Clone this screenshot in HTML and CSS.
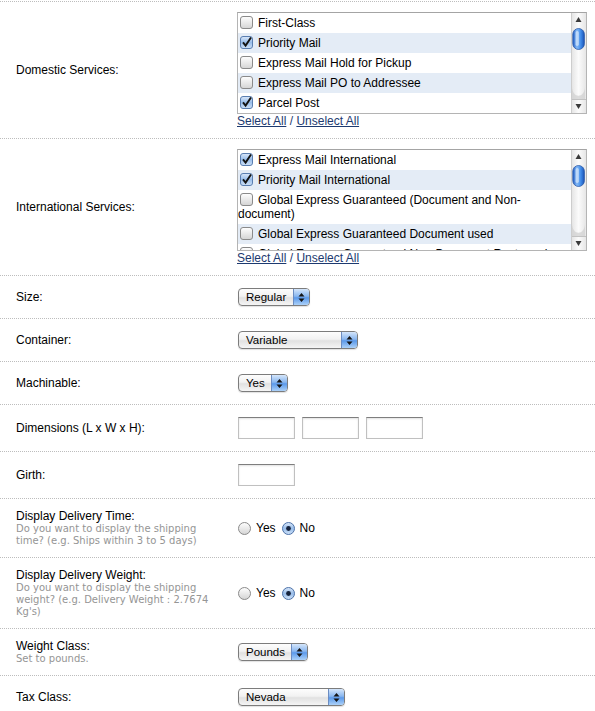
FILE: index.html
```html
<!DOCTYPE html>
<html>
<head>
<meta charset="utf-8">
<title>Shipping Settings</title>
<link rel="stylesheet" href="styles.css">
</head>
<body>
<svg class="defs" width="0" height="0" aria-hidden="true">
  <defs>
    <linearGradient id="g-box" x1="0" y1="0" x2="0" y2="1">
      <stop offset="0" stop-color="#ffffff"/>
      <stop offset="1" stop-color="#d4d4d4"/>
    </linearGradient>
    <linearGradient id="g-on" x1="0" y1="0" x2="0" y2="1">
      <stop offset="0" stop-color="#dce9fa"/>
      <stop offset=".5" stop-color="#98bdea"/>
      <stop offset="1" stop-color="#cfe2f8"/>
    </linearGradient>
    <linearGradient id="g-track" x1="0" y1="0" x2="1" y2="0">
      <stop offset="0" stop-color="#e2e2e2"/>
      <stop offset=".5" stop-color="#fbfbfb"/>
      <stop offset="1" stop-color="#e6e6e6"/>
    </linearGradient>
    <linearGradient id="g-thumb" x1="0" y1="0" x2="1" y2="0">
      <stop offset="0" stop-color="#1f5cc4"/>
      <stop offset=".35" stop-color="#86bbf7"/>
      <stop offset=".7" stop-color="#3f8ae8"/>
      <stop offset="1" stop-color="#1b52b4"/>
    </linearGradient>
    <symbol id="cb-off" viewBox="0 0 13 13">
      <rect x=".5" y=".5" width="12" height="12" rx="2.5" fill="url(#g-box)" stroke="#8a8a8a"/>
    </symbol>
    <symbol id="cb-on" viewBox="0 0 13 13">
      <rect x=".5" y=".5" width="12" height="12" rx="2.5" fill="url(#g-on)" stroke="#5a7eb0"/>
      <path d="M3 6.3 L5.6 9.6 L11 1.5" fill="none" stroke="#141414" stroke-width="1.9"/>
    </symbol>
    <symbol id="rd-off" viewBox="0 0 13 13">
      <circle cx="6.5" cy="6.5" r="6" fill="url(#g-box)" stroke="#8a8a8a"/>
    </symbol>
    <symbol id="rd-on" viewBox="0 0 13 13">
      <circle cx="6.5" cy="6.5" r="6" fill="url(#g-on)" stroke="#4d72a8"/>
      <circle cx="6.5" cy="6.5" r="2.4" fill="#16233c"/>
    </symbol>
    <symbol id="updown" viewBox="0 0 7 9">
      <path d="M3.5 0 L6.5 3.5 L0.5 3.5 Z M0.5 5.5 L6.5 5.5 L3.5 9 Z" fill="#151515"/>
    </symbol>
    <symbol id="scroll" viewBox="0 0 15 100">
      <rect width="15" height="100" fill="url(#g-track)"/>
      <rect x="0" y="0" width="1" height="100" fill="#cdcdcd"/>
      <path d="M7.5 4 L10.5 9 L4.5 9 Z" fill="#3a3a3a"/>
      <rect x="1.8" y="15.5" width="11.6" height="21" rx="5.8" fill="url(#g-thumb)" stroke="#2a58a6" stroke-width=".8"/>
      <rect x="4.5" y="18" width="3.4" height="15" rx="1.7" fill="#ffffff" opacity=".5"/>
      <path d="M1 73 C1 86 14 86 14 73 L14 86 L1 86 Z" fill="#cfcfcf" opacity=".7"/>
      <rect x="1" y="86" width="14" height="1" fill="#c2c2c2"/>
      <path d="M4.5 91 L10.5 91 L7.5 96 Z" fill="#3a3a3a"/>
    </symbol>
  </defs>
</svg>

<div class="form">
  <div class="row">
    <div class="label">Domestic Services:</div>
    <div class="control stack">
      <div class="listbox">
        <ul class="items">
          <li><svg class="cb"><use href="#cb-off"/></svg>First-Class</li>
          <li><svg class="cb"><use href="#cb-on"/></svg>Priority Mail</li>
          <li><svg class="cb"><use href="#cb-off"/></svg>Express Mail Hold for Pickup</li>
          <li><svg class="cb"><use href="#cb-off"/></svg>Express Mail PO to Addressee</li>
          <li><svg class="cb"><use href="#cb-on"/></svg>Parcel Post</li>
        </ul>
        <svg class="scrollbar"><use href="#scroll"/></svg>
      </div>
      <div class="links"><a href="#">Select All</a> <span class="sep">/</span> <a href="#">Unselect All</a></div>
    </div>
  </div>

  <div class="row">
    <div class="label">International Services:</div>
    <div class="control stack">
      <div class="listbox">
        <ul class="items">
          <li><svg class="cb"><use href="#cb-on"/></svg>Express Mail International</li>
          <li><svg class="cb"><use href="#cb-on"/></svg>Priority Mail International</li>
          <li><svg class="cb"><use href="#cb-off"/></svg>Global Express Guaranteed (Document and Non-document)</li>
          <li><svg class="cb"><use href="#cb-off"/></svg>Global Express Guaranteed Document used</li>
          <li><svg class="cb"><use href="#cb-off"/></svg>Global Express Guaranteed Non-Document Rectangular</li>
        </ul>
        <svg class="scrollbar"><use href="#scroll"/></svg>
      </div>
      <div class="links"><a href="#">Select All</a> <span class="sep">/</span> <a href="#">Unselect All</a></div>
    </div>
  </div>

  <div class="row">
    <div class="label">Size:</div>
    <div class="control">
      <span class="popup w72"><span class="popup-text">Regular</span><span class="popup-arrow"><svg><use href="#updown"/></svg></span></span>
    </div>
  </div>

  <div class="row">
    <div class="label">Container:</div>
    <div class="control">
      <span class="popup w120"><span class="popup-text">Variable</span><span class="popup-arrow"><svg><use href="#updown"/></svg></span></span>
    </div>
  </div>

  <div class="row">
    <div class="label">Machinable:</div>
    <div class="control">
      <span class="popup w50"><span class="popup-text">Yes</span><span class="popup-arrow"><svg><use href="#updown"/></svg></span></span>
    </div>
  </div>

  <div class="row">
    <div class="label">Dimensions (L x W x H):</div>
    <div class="control">
      <input class="field" type="text"><input class="field" type="text"><input class="field" type="text">
    </div>
  </div>

  <div class="row">
    <div class="label">Girth:</div>
    <div class="control">
      <input class="field" type="text">
    </div>
  </div>

  <div class="row">
    <div class="label">Display Delivery Time:<span class="hint">Do you want to display the shipping time? (e.g. Ships within 3 to 5 days)</span></div>
    <div class="control">
      <div class="radios">
        <span class="opt"><svg class="rd"><use href="#rd-off"/></svg>Yes</span>
        <span class="opt"><svg class="rd"><use href="#rd-on"/></svg>No</span>
      </div>
    </div>
  </div>

  <div class="row">
    <div class="label">Display Delivery Weight:<span class="hint">Do you want to display the shipping weight? (e.g. Delivery Weight : 2.7674 Kg's)</span></div>
    <div class="control">
      <div class="radios">
        <span class="opt"><svg class="rd"><use href="#rd-off"/></svg>Yes</span>
        <span class="opt"><svg class="rd"><use href="#rd-on"/></svg>No</span>
      </div>
    </div>
  </div>

  <div class="row">
    <div class="label">Weight Class:<span class="hint">Set to pounds.</span></div>
    <div class="control">
      <span class="popup w70"><span class="popup-text">Pounds</span><span class="popup-arrow"><svg><use href="#updown"/></svg></span></span>
    </div>
  </div>

  <div class="row">
    <div class="label">Tax Class:</div>
    <div class="control">
      <span class="popup w107"><span class="popup-text">Nevada</span><span class="popup-arrow"><svg><use href="#updown"/></svg></span></span>
    </div>
  </div>
</div>
</body>
</html>
```

FILE: styles.css
```css
* {
  box-sizing: border-box;
}

body {
  margin: 0;
  background: #ffffff;
  font-family: "Liberation Sans", Arial, Helvetica, sans-serif;
  font-size: 12px;
  color: #111111;
}

.defs {
  display: block;
  width: 0;
  height: 0;
  overflow: hidden;
}

.form {
  margin-top: 1px;
  border-top: 1px dotted #bdbdbd;
}

.row {
  display: grid;
  grid-template-columns: 221px 1fr;
  align-items: center;
  padding: 10px 0 10px 16px;
  border-bottom: 1px dotted #bdbdbd;
}

.label {
  min-height: 22px;
  display: flex;
  flex-direction: column;
  justify-content: center;
  padding-right: 21px;
  line-height: 14px;
  color: #000000;
}

.hint {
  font-family: "DejaVu Sans", Verdana, sans-serif;
  font-size: 10px;
  line-height: 12px;
  color: #959595;
}

.control {
  min-height: 22px;
  display: flex;
  align-items: center;
}

.control.stack {
  flex-direction: column;
  align-items: flex-start;
}

/* list box with checkboxes */
.listbox {
  width: 350px;
  height: 102px;
  border: 1px solid #b4b4b4;
  border-top-color: #a4a4a4;
  display: flex;
  overflow: hidden;
  background: #ffffff;
}

.items {
  flex: 1;
  list-style: none;
  margin: 0;
  padding: 0;
  overflow: hidden;
}

.items li {
  padding: 3px 4px 3px 0;
  line-height: 14px;
  color: #000000;
}

.items li:nth-child(even) {
  background: #e4ecf6;
}

.cb {
  width: 13px;
  height: 13px;
  vertical-align: -2px;
  margin: 0 5px 0 2px;
}

.scrollbar {
  display: block;
  flex: none;
  width: 15px;
  height: 100px;
}

.links {
  line-height: 14px;
}

.links a {
  color: #1d3a70;
  text-decoration: underline;
}

.sep {
  color: #1d3a70;
}

/* popup buttons */
.popup {
  margin-left: 1px;
  height: 18px;
  display: inline-flex;
  align-items: stretch;
  border: 1px solid #7c7c7c;
  border-radius: 4px;
  overflow: hidden;
  background: linear-gradient(#fdfdfd, #f2f2f2 45%, #e1e1e1 55%, #f5f5f5);
  box-shadow: 0 1px 1px rgba(0, 0, 0, 0.12);
  font-size: 11.5px;
  color: #000000;
}

.popup-text {
  flex: 1;
  padding-left: 7px;
  line-height: 16px;
  white-space: nowrap;
}

.popup-arrow {
  flex: none;
  width: 16px;
  border-left: 1px solid #6b8cc2;
  background: linear-gradient(#d5e6fb, #8ab7ef 45%, #5b99ea 55%, #acd1f8);
  display: flex;
  align-items: center;
  justify-content: center;
}

.popup-arrow svg {
  width: 7px;
  height: 9px;
}

.w50 { width: 50px; }
.w70 { width: 70px; }
.w72 { width: 72px; }
.w107 { width: 107px; }
.w120 { width: 120px; }

/* text fields */
.field {
  width: 57px;
  height: 22px;
  margin: 2px 6px 2px 1px;
  padding: 0;
  border: 1px solid #c0c0c0;
  border-top-color: #7e7e7e;
  box-shadow: inset 0 1px 2px rgba(0, 0, 0, 0.12);
  background: #ffffff;
  font: inherit;
}

/* radios */
.radios {
  display: flex;
  align-items: center;
  margin-left: 1px;
}

.opt {
  display: flex;
  align-items: center;
  line-height: 14px;
  color: #000000;
}

.opt + .opt {
  margin-left: 6px;
}

.rd {
  width: 13px;
  height: 13px;
  margin-right: 5px;
}
```
